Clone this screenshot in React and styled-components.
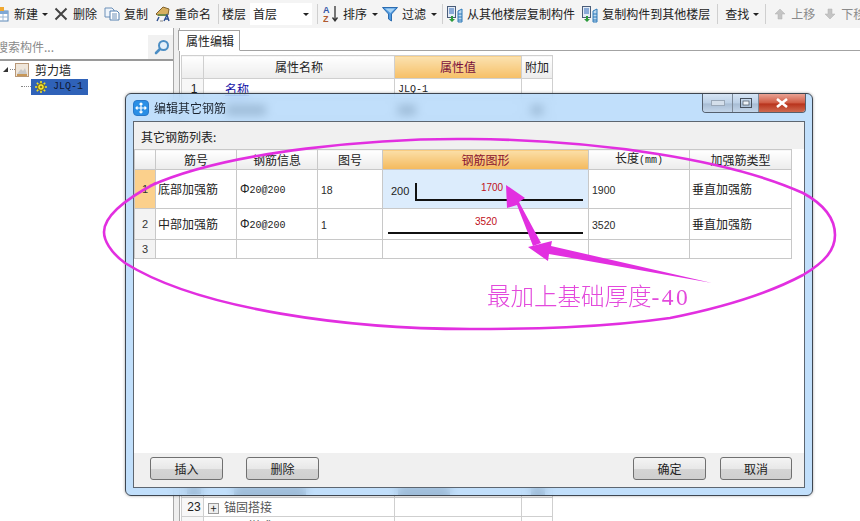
import React from 'react';
import styled, { createGlobalStyle } from 'styled-components';

const CJK = '"Noto Sans CJK SC", "Liberation Sans", sans-serif';
const MONO = '"Liberation Mono", "Noto Sans CJK SC", monospace';
const SANS = '"Liberation Sans", sans-serif';

const GlobalStyle = createGlobalStyle`
  html, body { margin: 0; padding: 0; background: #fff; overflow: hidden; }
  * { box-sizing: border-box; }
`;

const Page = styled.div`
  position: relative;
  width: 860px;
  height: 521px;
  overflow: hidden;
  background: #fff;
  color: #222;
  font: 12px/16px ${CJK};
`;

/* toolbar */
const Toolbar = styled.div`
  display: flex;
  align-items: center;
  height: 28px;
  background: #f4f4f4;
  margin-left: -6px;
  width: 880px;
  white-space: nowrap;
`;

const Tool = styled.div`
  display: flex;
  flex: none;
  align-items: center;
  gap: ${p => p.$gap ?? 4}px;
  margin-left: ${p => p.$ml ?? 0}px;
  color: ${p => (p.$muted ? '#8a8a8a' : '#222')};
`;

const Caret = styled.i`
  display: block;
  flex: none;
  width: 0;
  height: 0;
  margin-left: ${p => p.$ml ?? 0}px;
  border-left: 3px solid transparent;
  border-right: 3px solid transparent;
  border-top: 3px solid #222;
`;

const Sep = styled.div`
  flex: none;
  width: 1px;
  height: 20px;
  margin-left: ${p => p.$ml ?? 6}px;
  background: #cfcfcf;
`;

const FloorSelect = styled.div`
  display: flex;
  flex: none;
  align-items: center;
  justify-content: space-between;
  width: 62px;
  height: 22px;
  margin-left: 4px;
  padding: 0 3px;
  background: #fff;
`;

/* main area */
const Body = styled.div`
  display: flex;
  height: 493px;
`;

const LeftPanel = styled.div`
  width: 173px;
  flex: none;
  padding-top: 7px;
`;

const SearchRow = styled.div`
  display: flex;
  align-items: center;
  height: 26px;
  border-bottom: 2px solid #9a9a9a;
  background: #f1f1f1;
`;

const SearchInput = styled.div`
  width: 148px;
  height: 24px;
  padding: 4px 0 0 0;
  margin-right: 6px;
  background: #fff;
  color: #8a8a8a;
  overflow: hidden;
  white-space: nowrap;
  text-indent: -4px;
`;

const TreeRow = styled.div`
  display: flex;
  align-items: center;
  height: 17px;
  padding-left: ${p => p.$indent}px;
`;

const Dots = styled.i`
  display: block;
  width: ${p => p.$w}px;
  border-top: 1px dotted #888;
`;

const Twist = styled.i`
  display: block;
  width: 0;
  height: 0;
  margin-right: 2px;
  border-left: 5px solid transparent;
  border-bottom: 5px solid #333;
`;

const TreeLabel = styled.span`
  margin-left: 6px;
`;

const SelectedNode = styled.div`
  display: flex;
  align-items: center;
  gap: 6px;
  width: 57px;
  height: 16px;
  padding-left: 4px;
  background: #2f62b8;
  color: #101830;
  font: 10px/16px ${MONO};
`;

const Splitter = styled.div`
  width: 7px;
  flex: none;
  background: #efefef;
  border-left: 1px solid #a8a8a8;
  border-right: 1px solid #a8a8a8;
`;

const RightPanel = styled.div`
  flex: 1;
  min-width: 0;
  padding-top: 2px;
`;

const TabStrip = styled.div`
  height: 21px;
  border-bottom: 1px solid #a3a3a3;
`;

const Tab = styled.div`
  width: 62px;
  height: 21px;
  margin-left: -2px;
  padding: 2px 0 0 7px;
  background: #fff;
  border: 1px solid #a3a3a3;
  border-bottom-color: #fff;
`;

const PropTable = styled.table`
  margin: 4px 0 0 1px;
  width: 371px;
  table-layout: fixed;
  border-collapse: collapse;
`;

const PropHead = styled.th`
  width: ${p => p.$w}px;
  height: 23px;
  padding: 0;
  font-weight: 400;
  border: 1px solid #cfcfcf;
  background: ${p => (p.$active
    ? 'linear-gradient(#fbe2b0, #f6bf66)'
    : 'linear-gradient(#fff, #ececec)')};
  color: ${p => (p.$active ? '#7a0f3c' : '#222')};
`;

const PropCell = styled.td`
  height: ${p => p.$h ?? 19}px;
  padding: 0 0 0 ${p => p.$pl ?? 3}px;
  border: 1px solid #cfcfcf;
  background: ${p => (p.$num ? '#f7f7f7' : '#fff')};
  text-align: ${p => (p.$num ? 'center' : 'left')};
  font-family: ${p => (p.$num ? SANS : CJK)};
  white-space: nowrap;
  overflow: hidden;
`;

const PropLink = styled.span`
  margin-left: 21px;
  color: #1414a8;
  text-decoration: underline;
`;

const MonoText = styled.span`
  font: 10px/16px ${MONO};
`;

const Plain = styled.span`
  font: 10.5px/16px ${SANS};
  color: #2a2a2a;
`;

const SteelMark = styled.span`
  font: 12px/16px ${SANS};
`;

/* rows behind the glass frame only show as a smudge */
const Smudge = styled.i`
  display: inline-block;
  width: ${p => p.$w}px;
  height: 10px;
  background: #555;
  vertical-align: middle;
`;

const Expander = styled.i`
  display: inline-block;
  width: 11px;
  height: 11px;
  margin: 0 5px 0 1px;
  border: 1px solid #999;
  background: #eee;
  color: #222;
  font: 11px/9px ${CJK};
  text-align: center;
  vertical-align: -1px;
`;

const GreyName = styled.span`
  color: #555;
`;

/* dialog window */
const Dialog = styled.div`
  position: absolute;
  left: 125px;
  top: 93px;
  width: 688px;
  height: 403px;
  display: flex;
  flex-direction: column;
  padding: 0 7px 7px;
  border: 1px solid #3e4650;
  border-radius: 6px;
  background: rgba(176, 214, 250, 0.78);
  backdrop-filter: blur(5px);
  box-shadow: 0 0 3px rgba(0, 0, 0, 0.35);
`;

const TitleBar = styled.div`
  display: flex;
  align-items: center;
  gap: 5px;
  height: 27px;
  flex: none;
  color: #1c2430;
`;

const TitleText = styled.span`
  flex: 1;
  padding-top: 1px;
`;

const WindowButtons = styled.div`
  display: flex;
  align-self: flex-start;
  height: 19px;
  margin-right: -1px;
  border: 1px solid #55606e;
  border-top: 0;
  border-radius: 0 0 4px 4px;
  overflow: hidden;
`;

const WinButton = styled.div`
  display: flex;
  align-items: center;
  justify-content: center;
  width: ${p => p.$w}px;
  border-left: ${p => (p.$first ? 0 : '1px solid #7d8a99')};
  background: ${p => (p.$close
    ? 'linear-gradient(#e9a294, #cf5a42 50%, #b8331c 55%, #cf6a50)'
    : 'linear-gradient(#d6e5f5, #bcd0e6 50%, #a8bdd4 55%, #c4d6ea)')};
`;

const Panel = styled.div`
  flex: 1;
  display: flex;
  flex-direction: column;
  min-height: 0;
  border: 1px solid #5d6670;
  background: #fff;
`;

const ListHeader = styled.div`
  height: 27px;
  flex: none;
  padding: 7px 0 0 7px;
  background: #f0f0f0;
`;

const GridArea = styled.div`
  flex: 1;
  background: #fff;
`;

const Grid = styled.table`
  width: 657px;
  table-layout: fixed;
  border-collapse: collapse;
`;

const GridHead = styled.th`
  width: ${p => p.$w}px;
  height: 19px;
  padding: 0;
  font-weight: 400;
  border: 1px solid #c8c8c8;
  background: ${p => (p.$active
    ? 'linear-gradient(#fbdfa8, #f4b95c)'
    : 'linear-gradient(#fff, #ececec)')};
  color: ${p => (p.$active ? '#8a1230' : '#222')};
`;

const GridRow = styled.tr`
  height: ${p => p.$h}px;
`;

const Cell = styled.td`
  padding: 0 0 0 ${p => (p.$cjk ? 2 : 3)}px;
  border: 1px solid #c8c8c8;
  background: #fff;
  white-space: nowrap;
`;

const NumCell = styled.td`
  padding: 0;
  text-align: center;
  border: 1px solid #c8c8c8;
  background: ${p => (p.$active ? '#fbd08c' : '#f3f3f3')};
  font: 11px/14px ${SANS};
  color: #333;
`;

const ShapeCell = styled.td`
  padding: 0;
  border: ${p => (p.$active ? '1px dotted #222' : '1px solid #c8c8c8')};
  background: ${p => (p.$active ? '#dcecfc' : '#fff')};
  vertical-align: top;
`;

const Shape = styled.svg`
  display: block;
`;

const ButtonBar = styled.div`
  display: flex;
  align-items: flex-start;
  height: 34px;
  flex: none;
  padding: 4px 12px 0 16px;
  background: #f0f0f0;
`;

const Button = styled.div`
  width: ${p => p.$w ?? 73}px;
  height: 23px;
  margin-right: ${p => p.$mr ?? 0}px;
  text-align: center;
  line-height: 22px;
  border: 1px solid #707070;
  border-radius: 3px;
  background: linear-gradient(#f4f4f4, #e8e8e8 50%, #d4d4d4 55%, #cfcfcf);
  color: #222;
`;

const Spacer = styled.div`
  flex: 1;
`;

/* hand drawn notes on top of the screenshot */
const Markup = styled.svg`
  position: absolute;
  left: 0;
  top: 0;
  pointer-events: none;
`;

const Note = styled.div`
  position: absolute;
  left: 487px;
  top: 281px;
  color: #e349dc;
  font: 300 23.5px/32px "Liberation Serif", "Noto Sans CJK SC", serif;
  white-space: nowrap;
`;

const NoteNumber = styled.span`
  letter-spacing: 2.5px;
`;

/* icons */
const NewIcon = () => (
  <svg width="16" height="16" viewBox="0 0 16 16">
    <rect x="1" y="5" width="13" height="10" fill="#fff" stroke="#5b88b8" />
    <rect x="1" y="5" width="13" height="3" fill="#7fa8d4" />
    <path d="M4 8v7M9 8v7M1 11h13" stroke="#9db8d4" />
    <rect x="3" y="1" width="7" height="4" fill="#f0a830" />
  </svg>
);

const DeleteIcon = () => (
  <svg width="14" height="14" viewBox="0 0 14 14">
    <path d="M1.5 1.5 12.5 12.5M12.5 1.5 1.5 12.5" stroke="#444" strokeWidth="2" />
  </svg>
);

const CopyIcon = () => (
  <svg width="16" height="14" viewBox="0 0 16 14">
    <path d="M1 1h7l2 2v7H1z" fill="#eef4fb" stroke="#6c90b8" />
    <path d="M6 4h7l2 2v7H6z" fill="#fff" stroke="#5580b0" />
    <path d="M8 7h5M8 9h5M8 11h5" stroke="#6c90b8" />
  </svg>
);

const RenameIcon = () => (
  <svg width="16" height="16" viewBox="0 0 16 16">
    <path d="M1 8 8 1l6 2-1 6H2z" fill="#d8b060" stroke="#80622c" />
    <path d="M3 8h9v2H3z" fill="#6d8a4c" />
    <path d="M2 15 4 11M9 15l3-6 2 6M10.5 13h3" stroke="#2a4d8f" strokeWidth="1.4" fill="none" />
    <path d="M5 15h3" stroke="#888" />
  </svg>
);

const SortIcon = () => (
  <svg width="16" height="18" viewBox="0 0 16 18">
    <text x="0" y="8" fontSize="9" fontFamily="Liberation Sans, sans-serif" fontWeight="700" fill="#3558a8">A</text>
    <text x="0" y="17" fontSize="9" fontFamily="Liberation Sans, sans-serif" fontWeight="700" fill="#b05a30">Z</text>
    <path d="M12 1v14M9.500 12.500 12 16l2.500-3.500" stroke="#333" strokeWidth="1.300" fill="none" />
  </svg>
);

const FilterIcon = () => (
  <svg width="16" height="16" viewBox="0 0 16 16">
    <path d="M0.500 1.500h15L9.500 8v7l-3-2V8z" fill="#4f9ae0" stroke="#2c6cb0" />
    <path d="M3 2.500h10L8.500 7z" fill="#a9d3f5" />
  </svg>
);

const FloorCopyIcon = () => (
  <svg width="16" height="17" viewBox="0 0 16 17">
    <rect x="0.500" y="0.500" width="8" height="11" fill="#e4ecf6" stroke="#4a5c78" />
    <path d="M2 3h5M2 5h5M2 7h5" stroke="#2e68b8" />
    <path d="M4 10h2v3h2l-3 3-3-3h2z" fill="#2c9a3c" />
    <path d="M11 5l4-2v13l-4 0zM11 8h4M11 11h4M11 14h4" stroke="#2c78b8" fill="#bcd8ee" />
  </svg>
);

const ArrowIcon = ({ down }) => (
  <svg width="10" height="12" viewBox="0 0 10 12">
    <path
      d={down ? 'M3 1h4v5h3l-5 5-5-5h3z' : 'M5 1l5 5H7v5H3V6H0z'}
      fill="#c4c4c4"
      stroke="#b0b0b0"
      strokeWidth="0.500"
    />
  </svg>
);

const SearchIcon = () => (
  <svg width="16" height="16" viewBox="0 0 16 16">
    <circle cx="9.500" cy="6.500" r="4.500" fill="#e4f0fa" stroke="#4c8ec4" strokeWidth="2" />
    <path d="M6 10 2 14" stroke="#4c8ec4" strokeWidth="2.600" strokeLinecap="round" />
  </svg>
);

const FolderIcon = () => (
  <svg width="14" height="14" viewBox="0 0 14 14">
    <rect x="0.500" y="0.500" width="13" height="13" fill="#efe6da" stroke="#b89878" />
    <path d="M2 11 6 6l2 2 2-3 2 6z" fill="#c8c8c8" />
    <path d="M2 12h10" stroke="#c89858" strokeWidth="2" />
  </svg>
);

const GearIcon = () => (
  <svg width="12" height="12" viewBox="0 0 12 12">
    <path d="M6 0v12M0 6h12M1.800 1.800l8.400 8.400M10.200 1.800l-8.400 8.400" stroke="#f2e020" strokeWidth="1.600" />
    <circle cx="6" cy="6" r="3.400" fill="#f8ea30" stroke="#6a5a10" />
    <circle cx="6" cy="6" r="1.300" fill="#8a7a18" />
  </svg>
);

const AppIcon = () => (
  <svg width="16" height="16" viewBox="0 0 16 16">
    <rect x="0.500" y="0.500" width="15" height="15" rx="3.500" fill="#2a8fe6" stroke="#2a78c8" />
    <path d="M8 3v10M3 8h10M6.500 4.500 8 3l1.500 1.500M6.500 11.500 8 13l1.500-1.500M4.500 6.500 3 8l1.500 1.500M11.500 6.500 13 8l-1.500 1.500" stroke="#fff" strokeWidth="1.200" fill="none" />
  </svg>
);

const MinIcon = () => (
  <svg width="14" height="6" viewBox="0 0 14 6">
    <rect x="0.500" y="0.500" width="13" height="5" fill="#d4dfeb" stroke="#9aa8b8" />
  </svg>
);

const MaxIcon = () => (
  <svg width="12" height="10" viewBox="0 0 12 10">
    <rect x="0.500" y="0.500" width="11" height="9" fill="none" stroke="#46505c" />
    <rect x="3" y="3" width="6" height="4" fill="#eef3f8" stroke="#46505c" strokeWidth="0.700" />
  </svg>
);

const CloseIcon = () => (
  <svg width="14" height="10" viewBox="0 0 14 10">
    <path d="M2 1l10 8M12 1 2 9" stroke="#fff" strokeWidth="2.600" />
  </svg>
);

const columns = [
  { w: 21 }, { w: 81, t: '筋号' }, { w: 81, t: '钢筋信息' }, { w: 65, t: '图号' },
  { w: 206, t: '钢筋图形', active: true },
  { w: 101, t: <>长度<MonoText>(mm)</MonoText></> }, { w: 102, t: '加强筋类型' },
];

const App = () => (
  <Page>
    <GlobalStyle />
    <Toolbar>
      <Tool><NewIcon />新建<Caret /></Tool>
      <Tool $ml={6} $gap={5}><DeleteIcon />删除</Tool>
      <Tool $ml={7}><CopyIcon />复制</Tool>
      <Tool $ml={7}><RenameIcon />重命名</Tool>
      <Sep $ml={7} />
      <Tool $ml={3}>楼层</Tool>
      <FloorSelect>首层<Caret /></FloorSelect>
      <Sep $ml={5} />
      <Tool $ml={5}><SortIcon />排序<Caret $ml={1} /></Tool>
      <Tool $ml={4}><FilterIcon />过滤<Caret $ml={1} /></Tool>
      <Sep $ml={5} />
      <Tool $ml={4}><FloorCopyIcon />从其他楼层复制构件</Tool>
      <Tool $ml={7}><FloorCopyIcon />复制构件到其他楼层</Tool>
      <Sep $ml={7} />
      <Tool $ml={7}>查找<Caret /></Tool>
      <Sep $ml={6} />
      <Tool $ml={9} $gap={6} $muted><ArrowIcon />上移</Tool>
      <Tool $ml={10} $gap={6} $muted><ArrowIcon down />下移</Tool>
    </Toolbar>

    <Body>
      <LeftPanel>
        <SearchRow>
          <SearchInput>搜索构件...</SearchInput>
          <SearchIcon />
        </SearchRow>
        <TreeRow $indent={3}>
          <Twist />
          <Dots $w={5} />
          <FolderIcon />
          <TreeLabel>剪力墙</TreeLabel>
        </TreeRow>
        <TreeRow $indent={21}>
          <Dots $w={10} />
          <SelectedNode><GearIcon />JLQ-1</SelectedNode>
        </TreeRow>
      </LeftPanel>
      <Splitter />
      <RightPanel>
        <TabStrip><Tab>属性编辑</Tab></TabStrip>
        <PropTable>
          <thead>
            <tr>
              <PropHead $w={22} />
              <PropHead $w={191}>属性名称</PropHead>
              <PropHead $w={127} $active>属性值</PropHead>
              <PropHead $w={31}>附加</PropHead>
            </tr>
          </thead>
          <tbody>
            <tr>
              <PropCell $num>1</PropCell>
              <PropCell $pl={0}><PropLink>名称</PropLink></PropCell>
              <PropCell><MonoText>JLQ-1</MonoText></PropCell>
              <PropCell />
            </tr>
            <tr>
              <PropCell $num />
              <PropCell $pl={22}><Smudge $w={40} /></PropCell>
              <PropCell><Smudge $w={18} /></PropCell>
              <PropCell $pl={9}><Smudge $w={12} /></PropCell>
            </tr>
            <tr>
              <PropCell $num $h={361} />
              <PropCell />
              <PropCell />
              <PropCell />
            </tr>
            <tr>
              <PropCell $num><Smudge $w={14} /></PropCell>
              <PropCell $pl={30}><Smudge $w={72} /></PropCell>
              <PropCell><Smudge $w={52} /></PropCell>
              <PropCell $pl={9}><Smudge $w={14} /></PropCell>
            </tr>
            <tr>
              <PropCell $num>23</PropCell>
              <PropCell><Expander>+</Expander><GreyName>锚固搭接</GreyName></PropCell>
              <PropCell />
              <PropCell />
            </tr>
            <tr>
              <PropCell $num>24</PropCell>
              <PropCell><Expander>+</Expander><GreyName>显示样式</GreyName></PropCell>
              <PropCell />
              <PropCell />
            </tr>
          </tbody>
        </PropTable>
      </RightPanel>
    </Body>

    <Dialog>
      <TitleBar>
        <AppIcon />
        <TitleText>编辑其它钢筋</TitleText>
        <WindowButtons>
          <WinButton $w={29} $first><MinIcon /></WinButton>
          <WinButton $w={26}><MaxIcon /></WinButton>
          <WinButton $w={47} $close><CloseIcon /></WinButton>
        </WindowButtons>
      </TitleBar>
      <Panel>
        <ListHeader>其它钢筋列表:</ListHeader>
        <GridArea>
          <Grid>
            <thead>
              <tr>
                {columns.map((c, i) => (
                  <GridHead key={i} $w={c.w} $active={c.active}>{c.t}</GridHead>
                ))}
              </tr>
            </thead>
            <tbody>
              <GridRow $h={39}>
                <NumCell $active>1</NumCell>
                <Cell $cjk>底部加强筋</Cell>
                <Cell><SteelMark>Φ</SteelMark><MonoText>20@200</MonoText></Cell>
                <Cell><Plain>18</Plain></Cell>
                <ShapeCell $active>
                  <Shape width="204" height="37" viewBox="0 0 204 37">
                    <text x="8" y="25" fontSize="11" fontFamily="Liberation Sans, sans-serif" fill="#222">200</text>
                    <path d="M33 13v17h167" fill="none" stroke="#111" strokeWidth="2" />
                    <text x="109" y="21" fontSize="10" textAnchor="middle" fontFamily="Liberation Sans, sans-serif" fill="#c01020">1700</text>
                  </Shape>
                </ShapeCell>
                <Cell><Plain>1900</Plain></Cell>
                <Cell $cjk>垂直加强筋</Cell>
              </GridRow>
              <GridRow $h={31}>
                <NumCell>2</NumCell>
                <Cell $cjk>中部加强筋</Cell>
                <Cell><SteelMark>Φ</SteelMark><MonoText>20@200</MonoText></Cell>
                <Cell><Plain>1</Plain></Cell>
                <ShapeCell>
                  <Shape width="204" height="29" viewBox="0 0 204 29">
                    <text x="103" y="16" fontSize="10" textAnchor="middle" fontFamily="Liberation Sans, sans-serif" fill="#c01020">3520</text>
                    <path d="M5 24h195" stroke="#111" strokeWidth="2" />
                  </Shape>
                </ShapeCell>
                <Cell><Plain>3520</Plain></Cell>
                <Cell $cjk>垂直加强筋</Cell>
              </GridRow>
              <GridRow $h={19}>
                <NumCell>3</NumCell>
                <Cell /><Cell /><Cell /><ShapeCell /><Cell /><Cell />
              </GridRow>
            </tbody>
          </Grid>
        </GridArea>
        <ButtonBar>
          <Button $mr={23}>插入</Button>
          <Button>删除</Button>
          <Spacer />
          <Button $mr={14}>确定</Button>
          <Button $w={72}>取消</Button>
        </ButtonBar>
      </Panel>
    </Dialog>

    <Markup width="860" height="521" viewBox="0 0 860 521">
      <path
        d="M150 186C230 150 380 138 470 139C600 140 730 160 803 193C825 205 835 220 835 235C835 250 825 262 803 275C760 298 700 312 670 318C600 328 530 329 470 329C350 329 200 310 125 263C110 252 104 240 104 232C104 218 120 202 156 183"
        fill="none"
        stroke="#e22fe0"
        strokeWidth="2.600"
      />
      <path d="M506 185 525 198 519 202 541 243 533 246 517 205 507 208Z" fill="#e22fe0" />
      <path d="M528 247 552 241 551 246 712 283 549 254 548 261Z" fill="#e22fe0" />
    </Markup>
    <Note>最加上基础厚度<NoteNumber>-40</NoteNumber></Note>
  </Page>
);

export default App;
